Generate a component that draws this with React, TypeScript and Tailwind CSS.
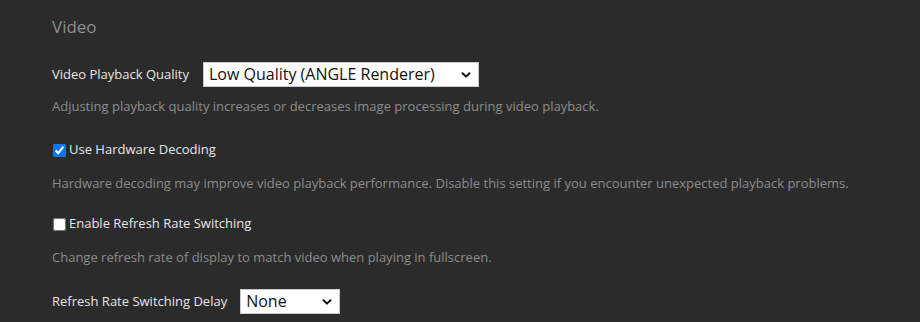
import React from 'react';

const Chevron: React.FC = () => (
  <svg
    viewBox="0 0 10 6"
    className="pointer-events-none absolute right-[8px] top-1/2 h-[6px] w-[10px] -translate-y-1/2"
    fill="none"
    stroke="#111"
    strokeWidth="2"
    strokeLinecap="round"
    strokeLinejoin="round"
  >
    <path d="M1.5 1.2 5 4.6 8.5 1.2" />
  </svg>
);

const Select: React.FC<{ value: string; options: string[]; width: string }> = ({ value, options, width }) => (
  <div className={`relative ${width}`}>
    <select
      defaultValue={value}
      className="h-[25px] w-full appearance-none rounded-none border border-[#ccc] bg-white pl-[5px] pr-6 text-[16px] leading-[23px] text-[#111] outline-none"
    >
      {options.map((o) => (
        <option key={o}>{o}</option>
      ))}
    </select>
    <Chevron />
  </div>
);

const App: React.FC = () => {
  return (
    <div className="h-[322px] w-[920px] overflow-hidden bg-[#2b2b2b] pl-[52px] pt-[15px] font-['Open_Sans','Noto_Sans',sans-serif]">
      <h2 className="text-[17px] leading-[24px] text-[#8f8f8f]">Video</h2>

      <div className="mt-[23px] flex items-center gap-[14px]">
        <label className="text-[13px] font-medium text-[#e6e6e6]">Video Playback Quality</label>
        <Select
          value="Low Quality (ANGLE Renderer)"
          options={['High Quality', 'Low Quality (ANGLE Renderer)']}
          width="w-[276px]"
        />
      </div>
      <p className="mt-[10px] text-[13px] leading-[18px] text-[#8c8c8c]">
        Adjusting playback quality increases or decreases image processing during video playback.
      </p>

      <label className="mt-[25px] flex h-[20px] items-center text-[13px] font-medium text-[#e6e6e6]">
        <input type="checkbox" defaultChecked className="m-0 ml-px mr-[3px] h-[13px] w-[13px]" />
        Use Hardware Decoding
      </label>
      <p className="mt-[14px] text-[13px] leading-[18px] text-[#8c8c8c]">
        Hardware decoding may improve video playback performance. Disable this setting if you encounter unexpected playback problems.
      </p>

      <label className="mt-[22px] flex h-[20px] items-center text-[13px] font-medium text-[#e6e6e6]">
        <input type="checkbox" className="m-0 ml-px mr-[3px] h-[13px] w-[13px]" />
        Enable Refresh Rate Switching
      </label>
      <p className="mt-[14px] text-[13px] leading-[18px] text-[#8c8c8c]">
        Change refresh rate of display to match video when playing in fullscreen.
      </p>

      <div className="mt-[23px] flex items-center gap-[13px]">
        <label className="text-[13px] font-medium text-[#e6e6e6]">Refresh Rate Switching Delay</label>
        <Select value="None" options={['None', '1 second', '2 seconds', '3 seconds']} width="w-[100px]" />
      </div>
    </div>
  );
};

export default App;
